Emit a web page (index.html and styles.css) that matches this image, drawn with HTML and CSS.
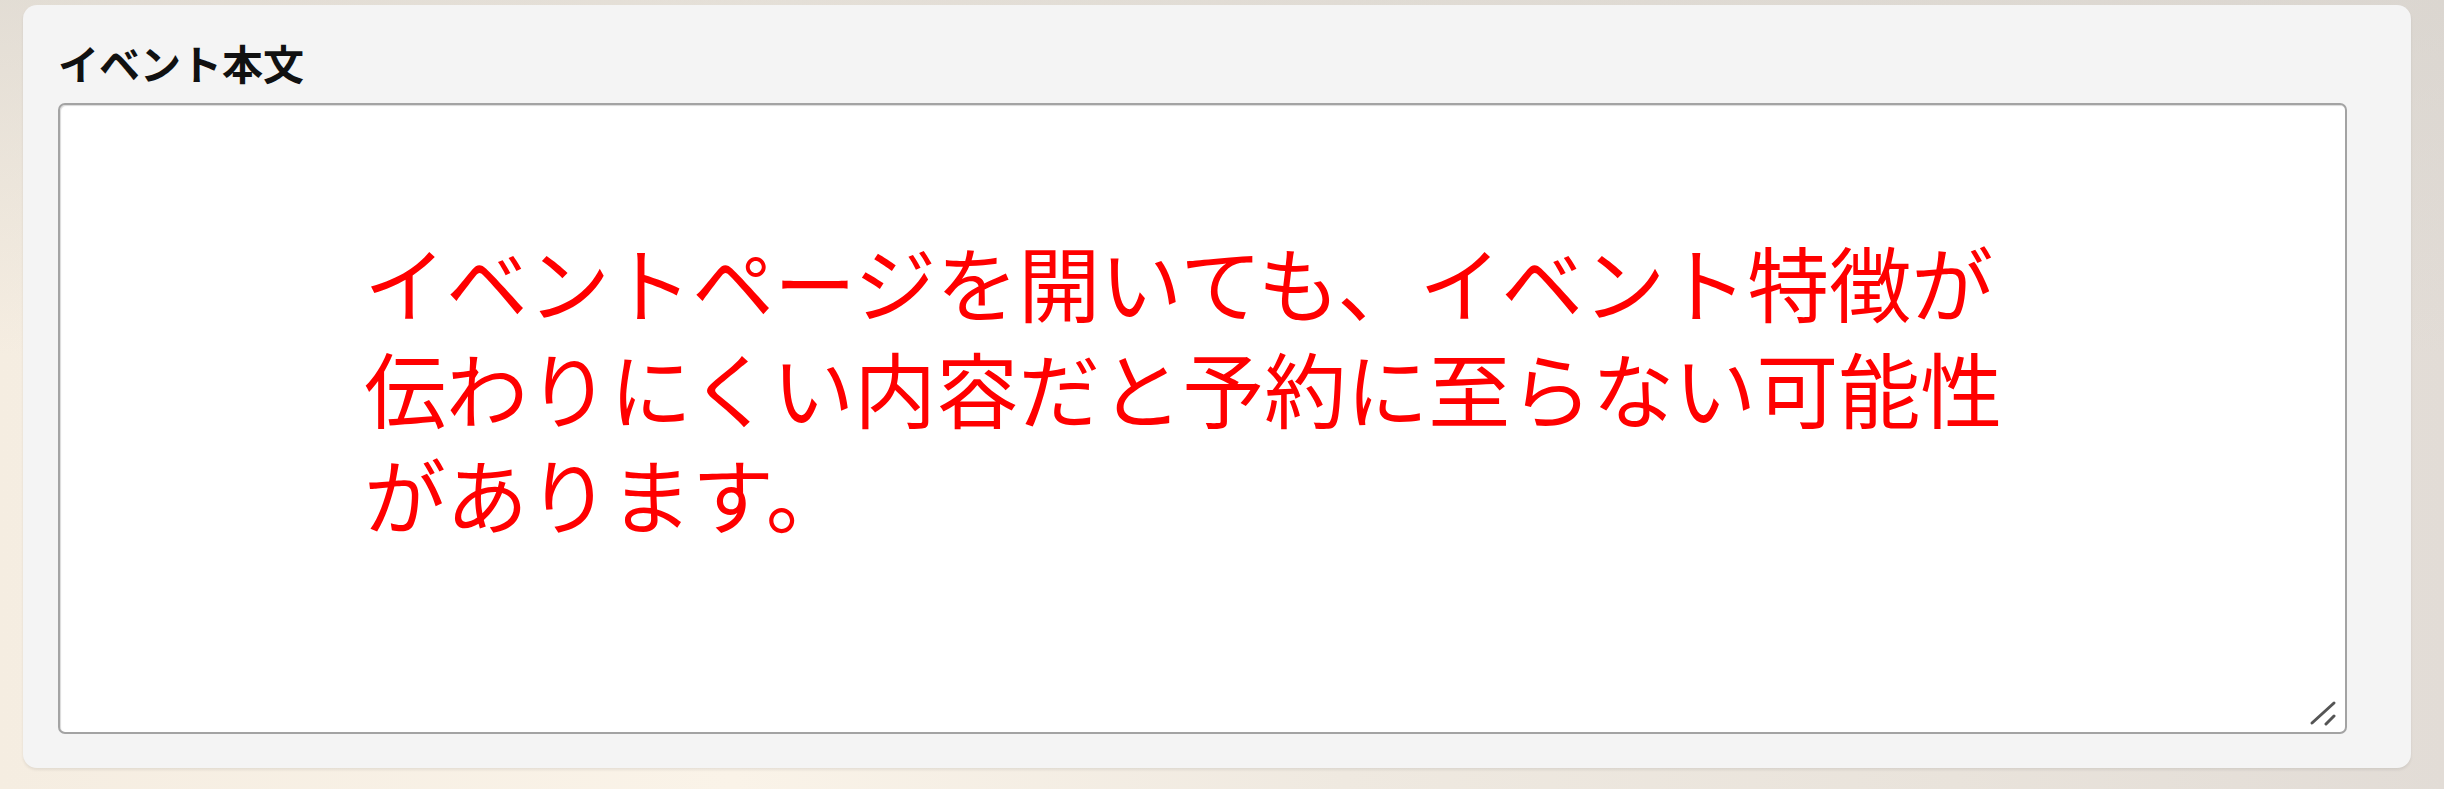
FILE: index.html
```html
<!DOCTYPE html>
<html lang="ja">
<head>
    <meta charset="UTF-8">
    <meta name="viewport" content="width=device-width, initial-scale=1.0">
    <title>イベント本文</title>
    <link rel="stylesheet" href="styles.css">
</head>
<body>

<div class="panel">
    <div class="field-label">イベント本文</div>

    <!-- 本文入力欄（注記つき） -->
    <div class="textbox">
        <p class="note">イベントページを開いても、イベント特徴が<br>伝わりにくい内容だと予約に至らない可能性<br>があります。</p>
        <svg class="grip" width="28" height="26" viewBox="0 0 28 26">
            <line x1="3" y1="23" x2="25" y2="3" />
            <line x1="17" y1="24" x2="25" y2="16" />
        </svg>
    </div>
</div>

</body>
</html>
```

FILE: styles.css
```css
body {
    margin: 0;
    padding: 5px 0 0 23px;
    height: 789px;
    box-sizing: border-box;
    overflow: hidden;
    font-family: "Noto Sans CJK JP", "Noto Sans", sans-serif;
    background:
        linear-gradient(180deg, rgba(214, 210, 204, 0.6) 0%, rgba(214, 210, 204, 0) 45%),
        linear-gradient(90deg, #f5ede1 0%, #faf3e8 30%, #efe9e0 55%, #e9e3db 80%, #e2dcd6 100%);
}
.panel {
    width: 2388px;
    height: 763px;
    box-sizing: border-box;
    padding: 33px 64px 34px 35px;
    background-color: #f4f4f4;
    border-radius: 14px;
    box-shadow: 0 2px 3px rgba(0, 0, 0, 0.08);
    display: flex;
    flex-direction: column;
}
.field-label {
    font-size: 41px;
    line-height: 49px;
    font-weight: 700;
    color: #111;
    margin-bottom: 16px;
}
.textbox {
    position: relative;
    flex: 1;
    background-color: #fff;
    border: 2px solid #a3a3a3;
    border-radius: 7px;
    box-shadow: inset 1px 1px 1px rgba(0, 0, 0, 0.15);
}
.note {
    margin: 0;
    padding: 123px 0 0 304px;
    font-size: 82px;
    line-height: 106px;
    font-weight: 400;
    color: #ff0000;
    white-space: nowrap;
}
.grip {
    position: absolute;
    right: 8px;
    bottom: 6px;
}
.grip line {
    stroke: #555;
    stroke-width: 3;
    stroke-linecap: round;
}
```
